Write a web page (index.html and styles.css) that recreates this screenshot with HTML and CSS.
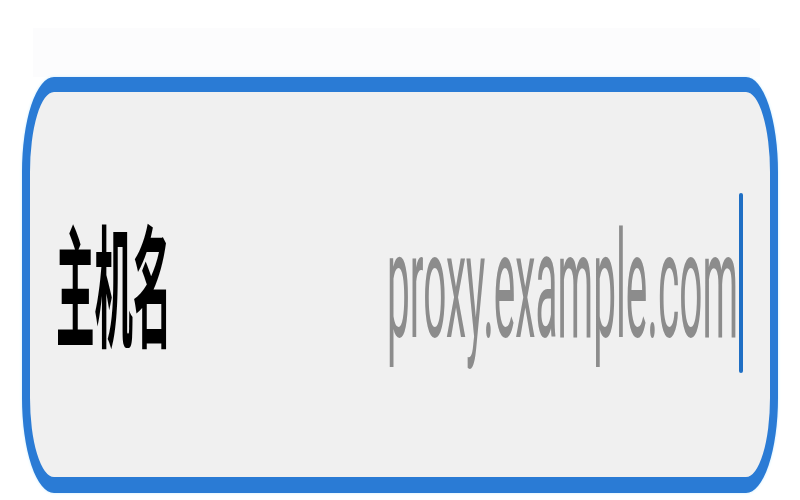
FILE: index.html
```html
<!DOCTYPE html>
<html lang="zh-CN">
<head>
  <meta charset="UTF-8">
  <meta name="viewport" content="width=device-width, initial-scale=1.0">
  <title>主机名</title>
  <link rel="stylesheet" href="styles.css">
</head>
<body>

  <div class="page">
    <!-- остаток строки выше -->
    <div class="prev-row"></div>

    <div class="field">
      <span class="label">主机名</span>
      <div class="value">
        <span class="placeholder">proxy.example.com</span>
        <span class="caret"></span>
      </div>
    </div>
  </div>

</body>
</html>
```

FILE: styles.css
```css
* { box-sizing: border-box; }
html, body {
  margin: 0;
  padding: 0;
  background: #ffffff;
}
.page {
  width: 800px;
  height: 500px;
  padding: 28px 22px 0;
}
.prev-row {
  height: 49px;
  margin: 0 18px 0 11px;
  background: #fcfcfd;
}
.field {
  height: 416px;
  display: flex;
  align-items: center;
  justify-content: space-between;
  padding: 0 27px 0 26px;
  background: #f0f0f0;
  border: solid #2a7bd5;
  border-width: 15px 8px 16px;
  border-radius: 32px / 95px;
  box-shadow: 0 0 3px #c9ecff;
}
.label {
  display: inline-block;
  margin-bottom: 10px;
  font-family: "Noto Sans CJK SC", sans-serif;
  font-weight: 700;
  font-size: 38.5px;
  line-height: 1;
  color: #000;
  transform: scaleY(3.43);
}
.value {
  display: flex;
  align-items: center;
}
.placeholder {
  display: inline-block;
  margin-top: 6px;
  font-family: Roboto, "Liberation Sans", sans-serif;
  font-size: 40.6px;
  line-height: 1;
  color: #8c8c8c;
  transform: scaleY(3.65);
}
.caret {
  width: 4px;
  height: 180px;
  margin-left: 1px;
  margin-bottom: 4px;
  background: #1f6fc4;
  border-radius: 2px;
}
```
